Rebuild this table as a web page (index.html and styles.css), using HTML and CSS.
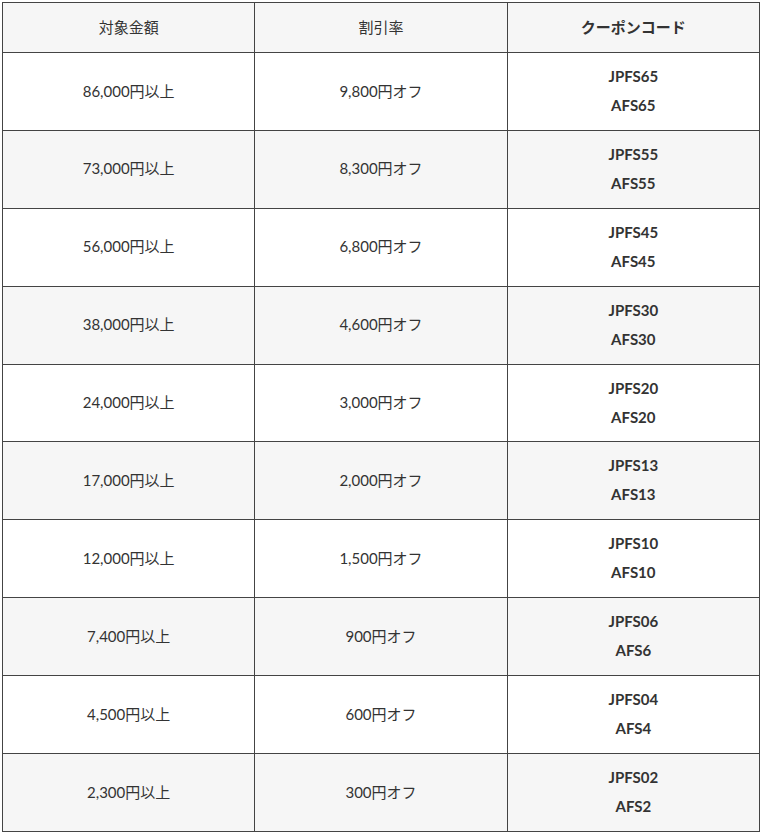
FILE: index.html
```html
<!DOCTYPE html>
<html lang="ja">
<head>
<meta charset="utf-8">
<link rel="stylesheet" href="styles.css">
</head>
<body>
<table class="coupon-table">
<thead>
<tr><th>対象金額</th><th>割引率</th><th class="bold">クーポンコード</th></tr>
</thead>
<tbody>
<tr><td>86,000円以上</td><td>9,800円オフ</td><td class="code">JPFS65<br>AFS65</td></tr>
<tr><td>73,000円以上</td><td>8,300円オフ</td><td class="code">JPFS55<br>AFS55</td></tr>
<tr><td>56,000円以上</td><td>6,800円オフ</td><td class="code">JPFS45<br>AFS45</td></tr>
<tr><td>38,000円以上</td><td>4,600円オフ</td><td class="code">JPFS30<br>AFS30</td></tr>
<tr><td>24,000円以上</td><td>3,000円オフ</td><td class="code">JPFS20<br>AFS20</td></tr>
<tr><td>17,000円以上</td><td>2,000円オフ</td><td class="code">JPFS13<br>AFS13</td></tr>
<tr><td>12,000円以上</td><td>1,500円オフ</td><td class="code">JPFS10<br>AFS10</td></tr>
<tr><td>7,400円以上</td><td>900円オフ</td><td class="code">JPFS06<br>AFS6</td></tr>
<tr><td>4,500円以上</td><td>600円オフ</td><td class="code">JPFS04<br>AFS4</td></tr>
<tr><td>2,300円以上</td><td>300円オフ</td><td class="code">JPFS02<br>AFS2</td></tr>
</tbody>
</table>
</body>
</html>
```
FILE: styles.css
```css
html, body {
  margin: 0;
  padding: 0;
  background: #fff;
}
body {
  padding: 2px 2px 0 2px;
  font-family: Lato, "Noto Sans CJK JP", sans-serif;
  font-size: 15px;
  line-height: 29px;
  color: #333;
}
.coupon-table {
  width: 758px;
  border-collapse: collapse;
  table-layout: fixed;
}
.coupon-table th,
.coupon-table td {
  border: 1px solid #444;
  text-align: center;
  vertical-align: middle;
  padding: 9px 8px 9.9px;
  font-weight: normal;
}
.coupon-table thead th {
  background: #f6f6f6;
  padding: 10px 8px;
}
.coupon-table th.bold,
.coupon-table td.code {
  font-weight: bold;
}
.coupon-table tbody tr:nth-child(even) td {
  background: #f6f6f6;
}
```
